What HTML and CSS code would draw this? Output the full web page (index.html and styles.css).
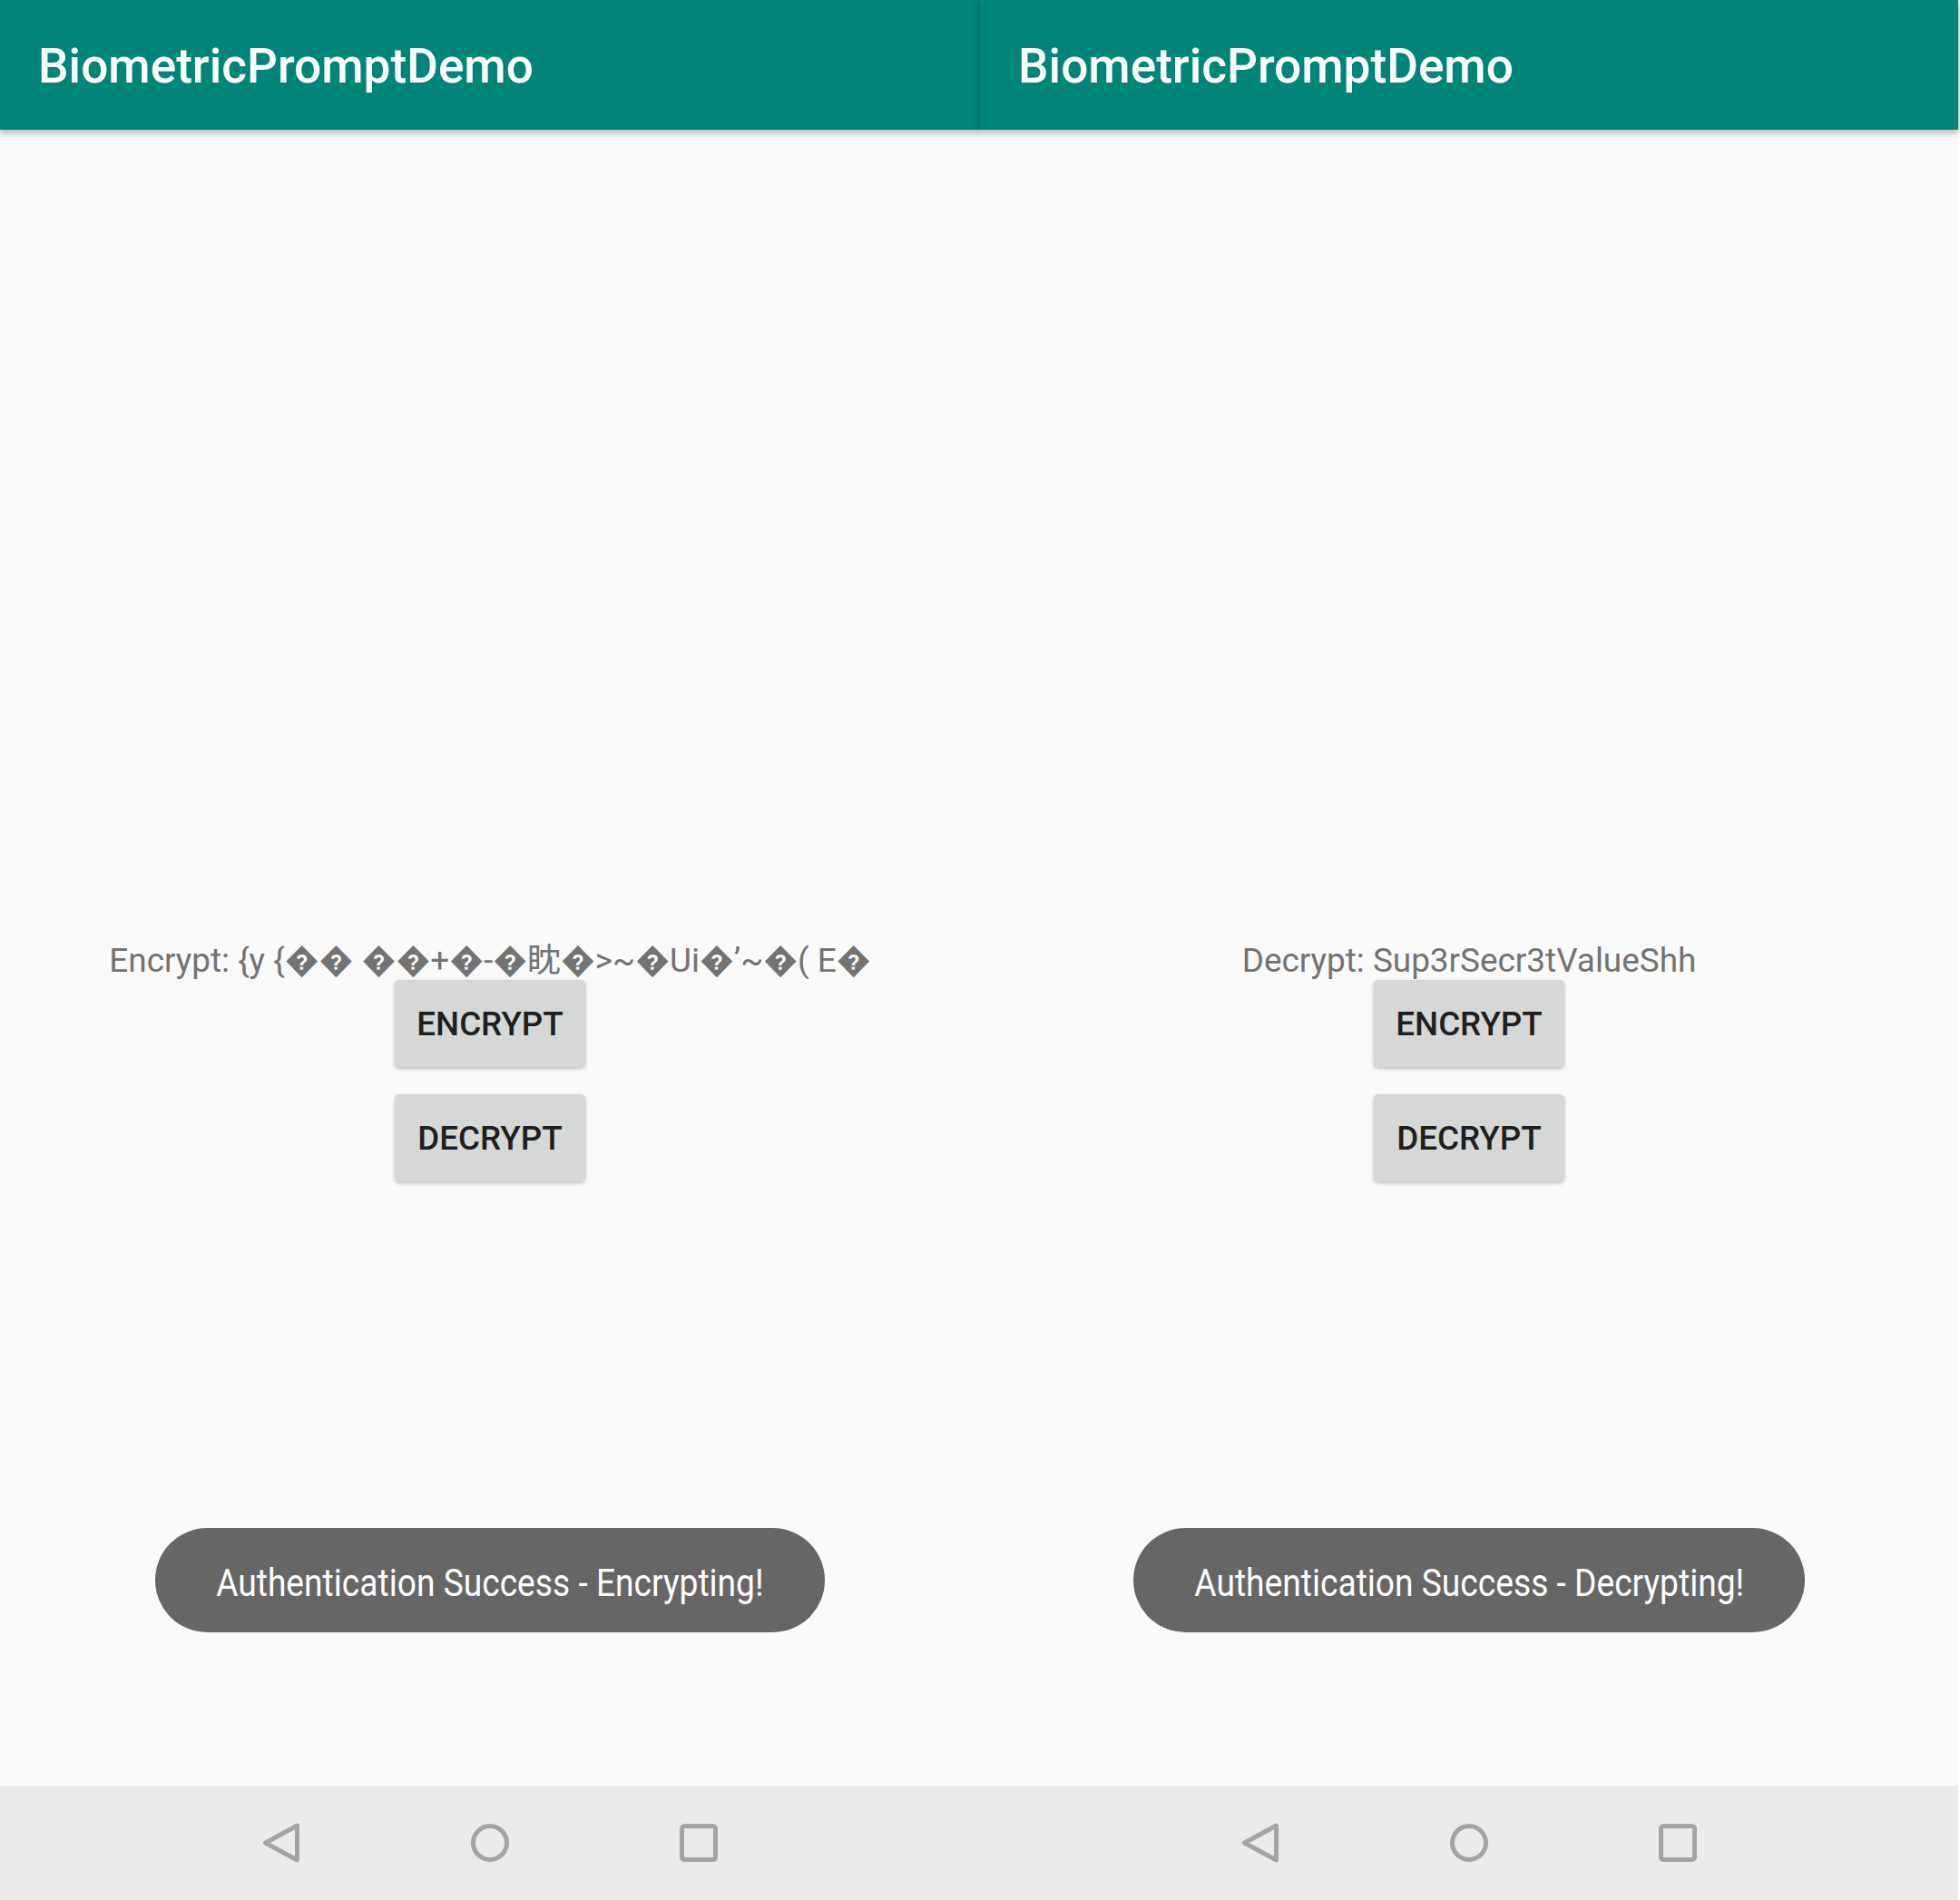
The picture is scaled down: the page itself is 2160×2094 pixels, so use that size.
FILE: index.html
```html
<!DOCTYPE html>
<html>
<head>
<meta charset="utf-8">
<link rel="stylesheet" href="styles.css">
</head>
<body>
<div class="screen">
  <div class="toolbar"><span class="title">BiometricPromptDemo</span></div>
  <div class="content">
    <div class="result">Encrypt: {y {�� ��+�-�眈�&gt;~�Ui�’~�( E�</div>
    <div class="btn">ENCRYPT</div>
    <div class="btn btn-gap">DECRYPT</div>
    <div class="toast"><span class="toast-text">Authentication Success - Encrypting!</span></div>
  </div>
  <div class="navbar">
    <div class="slot"><svg width="50" height="50" viewBox="0 0 50 50"><path d="M42.5 6 L7.5 25 L42.5 44 Z" class="ico"/></svg></div>
    <div class="slot"><svg width="50" height="50" viewBox="0 0 50 50"><circle cx="25" cy="25" r="18.5" class="ico"/></svg></div>
    <div class="slot"><svg width="50" height="50" viewBox="0 0 50 50"><rect x="6.5" y="6.5" width="37" height="37" rx="3" class="ico"/></svg></div>
  </div>
</div>
<div class="screen screen-right">
  <div class="toolbar"><span class="title">BiometricPromptDemo</span></div>
  <div class="content">
    <div class="result">Decrypt: Sup3rSecr3tValueShh</div>
    <div class="btn">ENCRYPT</div>
    <div class="btn btn-gap">DECRYPT</div>
    <div class="toast"><span class="toast-text">Authentication Success - Decrypting!</span></div>
  </div>
  <div class="navbar">
    <div class="slot"><svg width="50" height="50" viewBox="0 0 50 50"><path d="M42.5 6 L7.5 25 L42.5 44 Z" class="ico"/></svg></div>
    <div class="slot"><svg width="50" height="50" viewBox="0 0 50 50"><circle cx="25" cy="25" r="18.5" class="ico"/></svg></div>
    <div class="slot"><svg width="50" height="50" viewBox="0 0 50 50"><rect x="6.5" y="6.5" width="37" height="37" rx="3" class="ico"/></svg></div>
  </div>
</div>
</body>
</html>
```
FILE: styles.css
```css
html, body {
  margin: 0;
  padding: 0;
}
body {
  width: 2160px;
  height: 2094px;
  display: flex;
  background: #ffffff;
  overflow: hidden;
  font-family: Roboto, "DejaVu Sans", "Noto Sans CJK SC", sans-serif;
}
.screen {
  width: 1080px;
  height: 2094px;
  display: flex;
  flex-direction: column;
  background: #fafafa;
  flex: none;
}
.screen-right {
  width: 1078px;
}
.toolbar {
  height: 143px;
  flex: none;
  background: #008577;
  display: flex;
  align-items: center;
  padding-left: 42px;
  position: relative;
  z-index: 2;
  box-shadow: 0 3px 8px rgba(0, 0, 0, 0.3);
}
.title {
  color: #ffffff;
  font-size: 53.2px;
  font-weight: 500;
  line-height: 62px;
  padding-top: 3px;
  white-space: nowrap;
}
.content {
  flex: 1;
  display: flex;
  flex-direction: column;
  align-items: center;
  padding-top: 894px;
}
.result {
  font-size: 36.9px;
  line-height: 43px;
  height: 43px;
  color: #737373;
  white-space: nowrap;
}
.btn {
  width: 210px;
  height: 96px;
  background: #d6d7d7;
  border-radius: 5px;
  box-shadow: 0 2px 4px rgba(0, 0, 0, 0.24);
  display: flex;
  align-items: center;
  justify-content: center;
  font-size: 36.75px;
  font-weight: 500;
  color: #1f1f1f;
}
.btn-gap {
  margin-top: 30px;
}
.toast {
  margin-top: auto;
  margin-bottom: 169px;
  height: 115px;
  padding: 6px 67px 0;
  border-radius: 58px;
  background: #666666;
  color: #ffffff;
  display: flex;
  align-items: center;
  white-space: nowrap;
  box-sizing: border-box;
}
.toast-text {
  display: inline-block;
  font-size: 42px;
  line-height: 50px;
  transform: scaleX(0.885);
  margin: 0 -39px;
}
.navbar {
  height: 126px;
  flex: none;
  background: #ebebeb;
  display: flex;
  justify-content: center;
  align-items: center;
}
.slot {
  width: 230px;
  display: flex;
  justify-content: center;
  align-items: center;
}
.slot svg {
  display: block;
}
.ico {
  fill: none;
  stroke: #a4a4a4;
  stroke-width: 5;
  stroke-linejoin: round;
}
```
